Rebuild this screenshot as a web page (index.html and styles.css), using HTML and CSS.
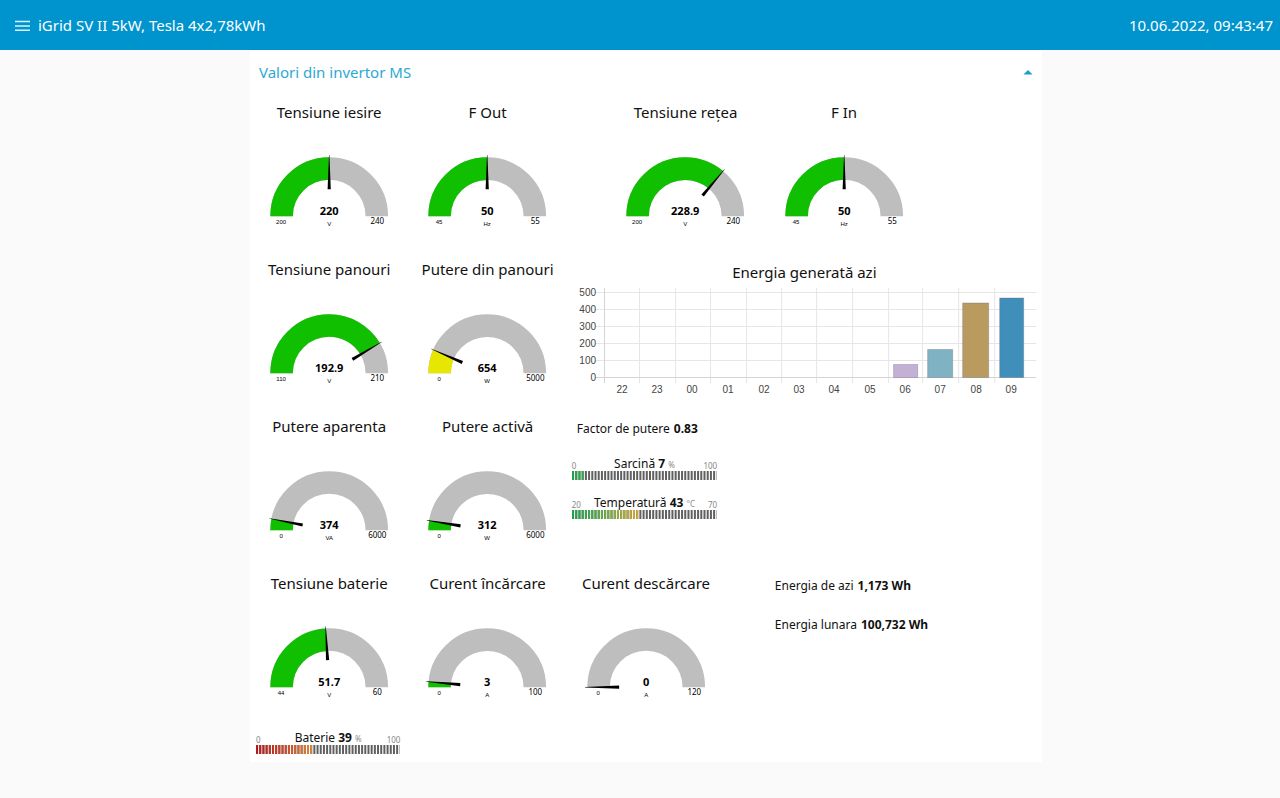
FILE: index.html
```html
<!DOCTYPE html>
<html lang="ro">
<head>
<meta charset="utf-8">
<meta name="viewport" content="width=device-width, initial-scale=1">
<title>iGrid SV II 5kW, Tesla 4x2,78kWh</title>
<link rel="stylesheet" href="styles.css">
</head>
<body>
<svg class="defs" width="0" height="0" aria-hidden="true">
  <defs>
    <linearGradient id="rise" gradientUnits="userSpaceOnUse" x1="0" y1="0" x2="144" y2="0">
      <stop offset="0" stop-color="#1fa050"/><stop offset="0.15" stop-color="#45a84c"/><stop offset="0.32" stop-color="#96ac3c"/><stop offset="0.45" stop-color="#d2a23c"/><stop offset="1" stop-color="#c81e1e"/>
    </linearGradient>
    <linearGradient id="fall" gradientUnits="userSpaceOnUse" x1="0" y1="0" x2="144" y2="0">
      <stop offset="0" stop-color="#b81418"/><stop offset="0.2" stop-color="#c8482a"/><stop offset="0.4" stop-color="#d88a3c"/><stop offset="1" stop-color="#1fa050"/>
    </linearGradient>
    <path id="arc" d="M31.5 87a47.5 47.5 0 0 1 95 0" pathLength="100" fill="none" stroke-width="22.5"/>
    <path id="needle" d="M18 86.3L52 84.9V88.1L18 86.7z" transform="translate(0 .5)" fill="#000"/>
  </defs>
</svg>

<header class="toolbar">
  <button class="menu" type="button" aria-label="Meniu">
    <svg width="16" height="12" viewBox="0 0 16 12"><path d="M0 2.5h15M0 7h15M0 11.3h15" stroke="#d8f4ff" stroke-width="1.4"/></svg>
  </button>
  <h1 class="toolbar-title">iGrid SV II 5kW, Tesla 4x2,78kWh</h1>
  <time class="clock" datetime="2022-06-10T09:43:47">10.06.2022, 09:43:47</time>
</header>

<main class="page">
<section class="panel">
  <button class="panel-head" type="button" aria-expanded="true">
    <span>Valori din invertor MS</span>
    <svg width="10" height="6" viewBox="0 0 10 6"><path d="M.5 5.5L5 1L9.5 5.5z" fill="#1c9cc8"/></svg>
  </button>

  <div class="grid">
    <article class="gauge r1 c1">
      <h2>Tensiune iesire</h2>
      <svg viewBox="0 0 158 123"><use href="#arc" class="track"/><use href="#arc" class="fill" stroke-dasharray="50 200"/><use href="#needle" transform="rotate(90 79 87)"/>
      <text x="79" y="86" class="val">220</text><text x="79" y="97" class="unit">V</text><text x="31" y="95" class="min">200</text><text x="127" y="95" class="max">240</text></svg>
    </article>
    <article class="gauge r1 c5">
      <h2>F Out</h2>
      <svg viewBox="0 0 158 123"><use href="#arc" class="track"/><use href="#arc" class="fill" stroke-dasharray="50 200"/><use href="#needle" transform="rotate(90 79 87)"/>
      <text x="79" y="86" class="val">50</text><text x="79" y="97" class="unit">Hz</text><text x="31" y="95" class="min">45</text><text x="127" y="95" class="max">55</text></svg>
    </article>
    <article class="gauge r1 c10">
      <h2>Tensiune rețea</h2>
      <svg viewBox="0 0 158 123"><use href="#arc" class="track"/><use href="#arc" class="fill" stroke-dasharray="72.25 200"/><use href="#needle" transform="rotate(130 79 87)"/>
      <text x="79" y="86" class="val">228.9</text><text x="79" y="97" class="unit">V</text><text x="31" y="95" class="min">200</text><text x="127" y="95" class="max">240</text></svg>
    </article>
    <article class="gauge r1 c14">
      <h2>F In</h2>
      <svg viewBox="0 0 158 123"><use href="#arc" class="track"/><use href="#arc" class="fill" stroke-dasharray="50 200"/><use href="#needle" transform="rotate(90 79 87)"/>
      <text x="79" y="86" class="val">50</text><text x="79" y="97" class="unit">Hz</text><text x="31" y="95" class="min">45</text><text x="127" y="95" class="max">55</text></svg>
    </article>

    <article class="gauge r2 c1">
      <h2>Tensiune panouri</h2>
      <svg viewBox="0 0 158 123"><use href="#arc" class="track"/><use href="#arc" class="fill" stroke-dasharray="82.9 200"/><use href="#needle" transform="rotate(149.2 79 87)"/>
      <text x="79" y="86" class="val">192.9</text><text x="79" y="97" class="unit">V</text><text x="31" y="95" class="min">110</text><text x="127" y="95" class="max">210</text></svg>
    </article>
    <article class="gauge r2 c5">
      <h2>Putere din panouri</h2>
      <svg viewBox="0 0 158 123"><use href="#arc" class="track"/><use href="#arc" class="fill warn" stroke-dasharray="13.1 200"/><use href="#needle" transform="rotate(23.5 79 87)"/>
      <text x="79" y="86" class="val">654</text><text x="79" y="97" class="unit">W</text><text x="31" y="95" class="min">0</text><text x="127" y="95" class="max">5000</text></svg>
    </article>
    <article class="chart">
      <h2>Energia generată azi</h2>
      <svg viewBox="0 0 475 123">
        <path class="lines" d="M28 6.5H469M28 23.5H469M28 40.5H469M28 57.5H469M28 74.5H469M72.5 2V97M108.5 2V97M143.5 2V97M179.5 2V97M214.5 2V97M249.5 2V97M285.5 2V97M321.5 2V97M355.5 2V97M391.5 2V97M427.5 2V97"/>
        <path class="axis" d="M28 91.5H469M37.5 2V97"/>
        <g class="bars">
          <rect x="326.5" y="78.5" width="24" height="13" fill="#c5b0d5"/>
          <rect x="360.5" y="63.5" width="25" height="28" fill="#7fb3c4"/>
          <rect x="395.5" y="17" width="26" height="74.5" fill="#b99b5f"/>
          <rect x="432.5" y="12" width="24" height="79.5" fill="#3f8fba"/>
        </g>
        <g class="ylab"><text x="29" y="10">500</text><text x="29" y="27">400</text><text x="29" y="44">300</text><text x="29" y="61">200</text><text x="29" y="78">100</text><text x="29" y="95">0</text></g>
        <g class="xlab"><text x="55" y="107">22</text><text x="90" y="107">23</text><text x="125" y="107">00</text><text x="161" y="107">01</text><text x="197" y="107">02</text><text x="232" y="107">03</text><text x="267" y="107">04</text><text x="303" y="107">05</text><text x="338" y="107">06</text><text x="373" y="107">07</text><text x="409" y="107">08</text><text x="444" y="107">09</text></g>
      </svg>
    </article>

    <article class="gauge r3 c1">
      <h2>Putere aparenta</h2>
      <svg viewBox="0 0 158 123"><use href="#arc" class="track"/><use href="#arc" class="fill" stroke-dasharray="6.2 200"/><use href="#needle" transform="rotate(11.2 79 87)"/>
      <text x="79" y="86" class="val">374</text><text x="79" y="97" class="unit">VA</text><text x="31" y="95" class="min">0</text><text x="127" y="95" class="max">6000</text></svg>
    </article>
    <article class="gauge r3 c5">
      <h2>Putere activă</h2>
      <svg viewBox="0 0 158 123"><use href="#arc" class="track"/><use href="#arc" class="fill" stroke-dasharray="5.2 200"/><use href="#needle" transform="rotate(9.4 79 87)"/>
      <text x="79" y="86" class="val">312</text><text x="79" y="97" class="unit">W</text><text x="31" y="95" class="min">0</text><text x="127" y="95" class="max">6000</text></svg>
    </article>
    <p class="text factor">Factor de putere <b>0.83</b></p>
    <div class="linear load">
      <div class="linear-head"><small>0</small><span>Sarcină <b>7</b> <small>%</small></span><small>100</small></div>
      <svg viewBox="0 0 145 9"><path class="ticks" d="M0 4.5H144.4"/><path class="ticks lit-rise" d="M0 4.5H12"/></svg>
    </div>
    <div class="linear temp">
      <div class="linear-head"><small>20</small><span>Temperatură <b>43</b> <small>°C</small></span><small>70</small></div>
      <svg viewBox="0 0 145 9"><path class="ticks" d="M0 4.5H144.4"/><path class="ticks lit-rise" d="M0 4.5H67"/></svg>
    </div>

    <article class="gauge r4 c1">
      <h2>Tensiune baterie</h2>
      <svg viewBox="0 0 158 123"><use href="#arc" class="track"/><use href="#arc" class="fill" stroke-dasharray="48.1 200"/><use href="#needle" transform="rotate(86.6 79 87)"/>
      <text x="79" y="86" class="val">51.7</text><text x="79" y="97" class="unit">V</text><text x="31" y="95" class="min">44</text><text x="127" y="95" class="max">60</text></svg>
    </article>
    <article class="gauge r4 c5">
      <h2>Curent încărcare</h2>
      <svg viewBox="0 0 158 123"><use href="#arc" class="track"/><use href="#arc" class="fill" stroke-dasharray="3 200"/><use href="#needle" transform="rotate(5.4 79 87)"/>
      <text x="79" y="86" class="val">3</text><text x="79" y="97" class="unit">A</text><text x="31" y="95" class="min">0</text><text x="127" y="95" class="max">100</text></svg>
    </article>
    <article class="gauge r4 c9">
      <h2>Curent descărcare</h2>
      <svg viewBox="0 0 158 123"><use href="#arc" class="track"/><use href="#needle"/>
      <text x="79" y="86" class="val">0</text><text x="79" y="97" class="unit">A</text><text x="31" y="95" class="min">0</text><text x="127" y="95" class="max">120</text></svg>
    </article>
    <p class="text today">Energia de azi <b>1,173 Wh</b></p>
    <p class="text month">Energia lunara <b>100,732 Wh</b></p>

    <div class="linear battery">
      <div class="linear-head"><small>0</small><span>Baterie <b>39</b> <small>%</small></span><small>100</small></div>
      <svg viewBox="0 0 145 9"><path class="ticks" d="M0 4.5H144.4"/><path class="ticks lit-fall" d="M0 4.5H57.5"/></svg>
    </div>
  </div>
</section>
</main>
</body>
</html>
```
FILE: styles.css
```css
* { box-sizing: border-box; }
body { margin: 0; min-height: 100vh; background: #fafafa; color: #111; font: 15px/20px "Noto Sans", sans-serif; }
h1, h2, p { margin: 0; font-weight: 400; }
svg { display: block; }
.defs { position: absolute; }

.toolbar { display: flex; align-items: center; height: 50px; padding: 0 7px 0 15px; background: #0094ce; color: #fff; }
.menu { display: flex; padding: 0; margin-right: 7px; border: 0; background: none; cursor: pointer; }
.toolbar-title { flex: 1; font-size: 15px; }

.page { padding: 0 238px 36px 250px; }
.panel { background: #fff; }
.panel-head { display: flex; justify-content: space-between; align-items: center; width: 100%; height: 45px; padding: 0 9px 2px; border: 0; background: none; color: #2ba9d4; font: 15px/20px "Noto Sans", sans-serif; cursor: pointer; }

.grid { display: grid; grid-template-columns: repeat(20, minmax(0, 1fr)); grid-template-rows: repeat(3, 39px 39px 39px 40px) repeat(4, 39px) 40px; }
.r1 { grid-row: 1 / span 4; }
.r2 { grid-row: 5 / span 4; }
.r3 { grid-row: 9 / span 4; }
.r4 { grid-row: 13 / span 4; }
.c1 { grid-column: 1 / span 4; }
.c5 { grid-column: 5 / span 4; }
.c9 { grid-column: 9 / span 4; }
.c10 { grid-column: 10 / span 4; }
.c14 { grid-column: 14 / span 4; }

.gauge h2, .chart h2 { height: 34px; font-size: 15px; line-height: 34px; text-align: center; white-space: nowrap; }
.gauge svg, .chart svg { width: 100%; }
.track { stroke: #bebebe; }
.fill { stroke: #10c000; }
.warn { stroke: #e6e600; }
.gauge text { text-anchor: middle; font-size: 9px; }
.gauge .val { font-size: 11px; font-weight: 700; }
.gauge .unit, .gauge .min { font-family: "Liberation Sans", sans-serif; font-size: 6px; }
.gauge .max { font-size: 8px; }

.chart { grid-column: 9 / span 12; grid-row: 5 / span 4; }
.chart h2 { line-height: 40px; }
.chart text { font: 10px "Liberation Sans", sans-serif; fill: #444; }
.lines { stroke: #e6e6e6; fill: none; }
.axis { stroke: #d4d4d4; fill: none; }
.bars rect { stroke: #667; stroke-opacity: .35; }
.ylab { text-anchor: end; }
.xlab { text-anchor: middle; }

.text { display: flex; align-items: center; gap: 4px; padding-left: 10px; font-size: 12px; white-space: nowrap; }
.factor { grid-column: 9 / span 4; grid-row: 9; }
.today { grid-column: 14 / span 6; grid-row: 13; }
.month { grid-column: 14 / span 6; grid-row: 14; }

.linear { padding: 9px 8px 0 5px; font-size: 12px; }
.load { grid-column: 9 / span 4; grid-row: 10; }
.temp { grid-column: 9 / span 4; grid-row: 11; }
.battery { grid-column: 1 / span 4; grid-row: 17; padding-left: 6px; }
.linear-head { position: relative; z-index: 1; display: grid; grid-template-columns: 1fr auto 1fr; height: 14px; line-height: 14px; white-space: nowrap; }
.linear-head > small { line-height: 18px; }
.linear-head > small:last-child { text-align: right; }
.linear small { color: #888; font-size: 8px; }
.linear svg { width: 100%; }
.ticks { fill: none; stroke: #606060; stroke-width: 9; stroke-dasharray: 2 1.2; }
.lit-rise { stroke: url(#rise); }
.lit-fall { stroke: url(#fall); }
```
